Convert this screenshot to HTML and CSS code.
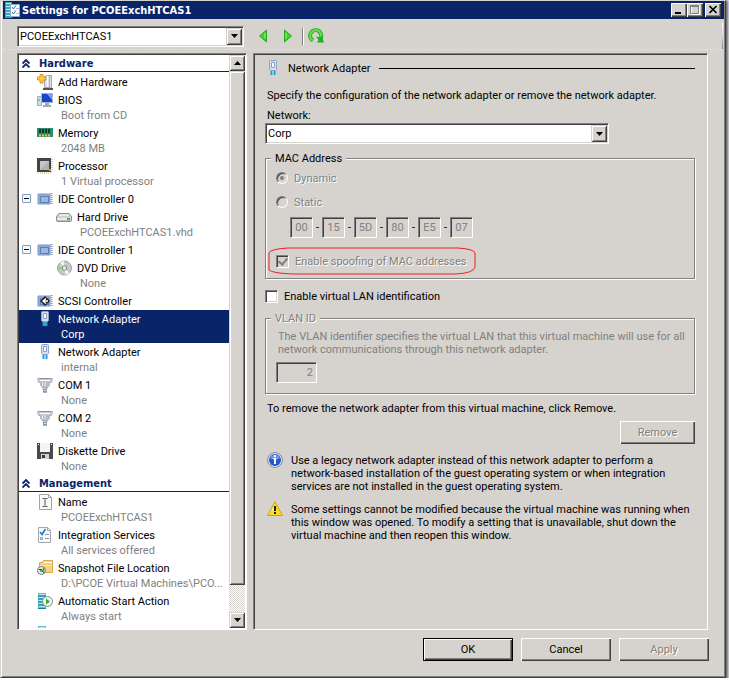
FILE: index.html
```
<!DOCTYPE html>
<html lang="en">
<head>
<meta charset="utf-8">
<title>Settings for PCOEExchHTCAS1</title>
<link rel="stylesheet" href="styles.css">
</head>
<body>
<svg class="defs" aria-hidden="true">
  <symbol id="chip" viewBox="0 0 16 16">
    <path d="M1 3h12v10H1z" fill="#8fabd6" stroke="#7f9cc9"/>
    <path d="M3.500 5.500h8v6h-8z" fill="#9db7de" stroke="#5b7db3"/>
    <path d="M14.500 2v12" stroke="#7894c2" stroke-width="2" stroke-dasharray="1 1"/>
    <path d="M2 2.500h9M2 13.500h9" stroke="#b9cbe6"/>
  </symbol>
  <symbol id="nic" viewBox="0 0 16 16">
    <path d="M4.500 1.500q0-1 1-1h5q1 0 1 1v8l-1 1h-5l-1-1z" fill="#d5e0f2" stroke="#8fa4c6"/>
    <path d="M6.500 2.500h3v5h-3z" fill="#f8fbff" stroke="#8ca0c2"/>
    <path d="M6.500 11v4M9.500 11v4" stroke="#1ba0d8" stroke-width="2"/>
    <path d="M8 11v4" stroke="#8ddcf5"/>
  </symbol>
  <symbol id="com" viewBox="0 0 16 16">
    <path d="M.5 1.500h15l-1 4h-2v3l-2 2h-5l-2-2v-3h-2z" fill="#c4cad2" stroke="#b0b6be"/>
    <path d="M3 3.500h10" stroke="#fff"/>
    <path d="M2 1.500h12" stroke="#8a919b"/>
    <path d="M3.500 4.500h9v3l-2 2h-5l-2-2z" fill="#b4bbc5"/>
    <path d="M5.500 5v4M8 5v4" stroke="#eef0f4"/>
    <path d="M5.500 10.500h5l-1 2v3h-3v-3z" fill="#d4d9e0" stroke="#a2aab6"/>
    <path d="M6 12.500h4M6 14.500h4" stroke="#8d96a3"/>
  </symbol>
  <symbol id="chevrons" viewBox="0 0 8 9">
    <path d="M.5 4.500L4 1l3.500 3.500M.5 8.500L4 5l3.500 3.500" fill="none" stroke="#0a246a" stroke-width="1.800"/>
  </symbol>
  <symbol id="server" viewBox="0 0 16 16">
    <path d="M1 0h8v16H1z" fill="#5bbfd0"/>
    <path d="M2 1.500h6M2 4.500h6M2 7.500h6M2 10.500h6M2 13.500h6" stroke="#b5edf3"/>
    <path d="M1 3h8M1 6h8M1 9h8M1 12h8M1 15.500h8" stroke="#237c94"/>
  </symbol>
</svg>

<div class="window">
  <header class="titlebar">
    <svg class="icon" viewBox="0 0 16 16" aria-hidden="true">
      <path d="M0 0h7v16H0z" fill="#3aa6b8"/>
      <path d="M1 1.500h5M1 4.500h5M1 7.500h5M1 10.500h5M1 13.500h5" stroke="#b5edf3"/>
      <path d="M5.500 2.500h9v12h-9z" fill="#fff" stroke="#9aa7c0"/>
      <path d="M7 5l1.500 2L11 3.500M7 10l1.500 2L11 8.500" fill="none" stroke="#1673c8"/>
      <path d="M11 6.500h3M11 11.500h3" stroke="#a9b4c6"/>
    </svg>
    <h1>Settings for PCOEExchHTCAS1</h1>
    <div class="captions">
      <button class="raised" aria-label="Minimize"><svg viewBox="0 0 12 10"><path d="M2 8h6" stroke="#000" stroke-width="2"/></svg></button>
      <button class="raised" aria-label="Maximize" disabled><svg viewBox="0 0 12 10"><path d="M2.500 1.500h8v8h-8z" fill="none" stroke="#fff"/><path d="M1.500 .5h8v8h-8z" fill="none" stroke="#808080"/><path d="M1 1.500h9" stroke="#808080"/></svg></button>
      <button class="raised close" aria-label="Close"><svg viewBox="0 0 12 10"><path d="M2.500 1l7 7M9.500 1l-7 7" stroke="#000" stroke-width="1.700"/></svg></button>
    </div>
  </header>

  <div class="toolbar">
    <div class="combo vm">
      <select aria-label="Virtual machine"><option>PCOEExchHTCAS1</option></select>
      <span class="raised arrow"><svg viewBox="0 0 7 4"><path d="M0 0h7L3.500 4z"/></svg></span>
    </div>
    <button class="tool" aria-label="Back"><svg viewBox="0 0 16 16"><path d="M10.500 2v12L3.500 8z" fill="#3fd42c" stroke="#2aa51d"/><path d="M9 5v5" stroke="#98f082"/></svg></button>
    <button class="tool" aria-label="Forward"><svg viewBox="0 0 16 16"><path d="M4.500 2v12l7-6z" fill="#3fd42c" stroke="#2aa51d"/><path d="M6 5v5" stroke="#98f082"/></svg></button>
    <span class="divider"></span>
    <button class="tool" aria-label="Refresh"><svg viewBox="0 0 16 16"><path d="M5 12.500A5.500 5.500 0 1 1 13 9" fill="none" stroke="#2aa51d" stroke-width="4"/><path d="M5 12.500A5.500 5.500 0 1 1 13 9" fill="none" stroke="#5be047" stroke-width="2.400"/><path d="M8 8.500l3 .5 4-1v4l1 2.500H9l1.500-2.500z" fill="#1fae2a"/></svg></button>
    <span class="edge"></span>
  </div>

  <main class="panes">
    <nav class="tree sunken">
      <div class="list">
        <h2><svg viewBox="0 0 8 9"><use href="#chevrons"/></svg>Hardware</h2>
        <ul>
          <li><svg class="icon" viewBox="0 0 16 16"><path d="M7.500 2.500l3-1h4v12h-7z" fill="#dfe2e4" stroke="#a3a8ac"/><path d="M10.500 2v11" stroke="#fff"/><path d="M12.500 2v11" stroke="#aeb4b9"/><path d="M6 15h10" stroke="#555" stroke-width="2"/><path d="M3 .5h3v2.500h3v3h-3v3h-3V6h-2.500V3h2.500z" fill="#fccf3c" stroke="#c88b0e" stroke-width=".8"/></svg><span>Add Hardware</span></li>
          <li><svg class="icon" viewBox="0 0 16 16"><path d="M.5 4.500h4v9h-4z" fill="#d5dade" stroke="#a3abb2"/><path d="M2 7v2" stroke="#2db92a"/><path d="M4.500 1.500h11v9h-11z" fill="#1744c9" stroke="#a7b3c6"/><path d="M10 2h5v6z" fill="#6da4f5"/><path d="M8 11h4v2h2v2H6v-2h2z" fill="#9fa8b3"/></svg><span>BIOS</span><small>Boot from CD</small></li>
          <li><svg class="icon" viewBox="0 0 16 16"><path d="M0 3h16v9H0z" fill="#24906a"/><path d="M2 4h2v4H2zM5 4h2v4H5zM8 4h2v4H8zM11 4h2v4h-2z" fill="#24302c"/><path d="M2 10.500h12" stroke="#f5be2b" stroke-width="2" stroke-dasharray="2 1"/></svg><span>Memory</span><small>2048 MB</small></li>
          <li><svg class="icon" viewBox="0 0 16 16"><path d="M0 0h14v14H0z" fill="#444"/><path d="M3 3h9v9H3z" fill="#c3c4c6"/><path d="M3 12l9-9v9z" fill="#aeb0b4"/><path d="M12 11h2v2h-2z" fill="#d99a28"/><path d="M1 15h13M15 1v13" stroke="#b9a16a" stroke-dasharray="1 1"/></svg><span>Processor</span><small>1 Virtual processor</small></li>
          <li><button class="fold" aria-label="Collapse"></button><svg class="icon" viewBox="0 0 16 16"><use href="#chip"/></svg><span>IDE Controller 0</span></li>
          <li class="child"><svg class="icon" viewBox="0 0 16 16"><path d="M3 4h10l3 3.500v4l-1.500 1.500h-13L0 11.500v-4z" fill="#8b8f91"/><path d="M3.500 5h9L15 8v3.500H1V8z" fill="#e9ebeb"/><path d="M1 8h14" stroke="#b5b9ba"/><path d="M11 9h3v2h-3z" fill="#36bb2d"/></svg><span>Hard Drive</span><small>PCOEExchHTCAS1.vhd</small></li>
          <li><button class="fold" aria-label="Collapse"></button><svg class="icon" viewBox="0 0 16 16"><use href="#chip"/></svg><span>IDE Controller 1</span></li>
          <li class="child"><svg class="icon" viewBox="0 0 16 16"><circle cx="8.500" cy="8" r="7" fill="#c7c8c9" stroke="#a2a3a4"/><path d="M8.500 8L4 2.500 8 1zM8.500 8l5 5-4 2z" fill="#f5f5f5"/><path d="M8.500 8L1.500 6 2 10z" fill="#8be06d"/><circle cx="8.500" cy="8" r="2.200" fill="#eee" stroke="#858585"/></svg><span>DVD Drive</span><small>None</small></li>
          <li><svg class="icon" viewBox="0 0 16 16"><use href="#chip"/><path d="M8 3l5 5-5 5-5-5z" fill="#222"/><path d="M11 8H6.500M9 5.500L6 8l3 2.500" fill="none" stroke="#fff" stroke-width="1.400"/></svg><span>SCSI Controller</span></li>
          <li class="selected"><svg class="icon" viewBox="0 0 16 16"><use href="#nic"/></svg><span>Network Adapter</span><small>Corp</small></li>
          <li><svg class="icon" viewBox="0 0 16 16"><use href="#nic"/></svg><span>Network Adapter</span><small>internal</small></li>
          <li><svg class="icon" viewBox="0 0 16 16"><use href="#com"/></svg><span>COM 1</span><small>None</small></li>
          <li><svg class="icon" viewBox="0 0 16 16"><use href="#com"/></svg><span>COM 2</span><small>None</small></li>
          <li><svg class="icon" viewBox="0 0 16 16"><path d="M0 0h16v16H0z" fill="#4a4a4c"/><path d="M3 0h10v9H3z" fill="#f4f4f6"/><path d="M4 11h8v5H4z" fill="#d0d1d3"/><path d="M5 12h3v3H5z" fill="#3a3a3c"/><path d="M1 1h1v1H1zM14 1h1v1h-1z" fill="#fff"/></svg><span>Diskette Drive</span><small>None</small></li>
        </ul>
        <h2><svg viewBox="0 0 8 9"><use href="#chevrons"/></svg>Management</h2>
        <ul>
          <li><svg class="icon" viewBox="0 0 16 16"><path d="M2.500 .5h9l3 3v12h-12z" fill="#fbfbfb" stroke="#a3a3a3"/><path d="M11.500 .5v3h3" fill="none" stroke="#a3a3a3"/><path d="M5.500 4.500h2l.5.5.5-.5h2M5.500 12.500h2L8 12l.5.500h2M8 5v7" fill="none" stroke="#555"/></svg><span>Name</span><small>PCOEExchHTCAS1</small></li>
          <li><svg class="icon" viewBox="0 0 16 16"><path d="M1.500 .5h9l3 3v12h-12z" fill="#fbfbfb" stroke="#9fa7b2"/><path d="M10.500 .5v3h3" fill="none" stroke="#9fa7b2"/><path d="M3 5l2 2.500L8.500 2" fill="none" stroke="#1c80d6" stroke-width="1.700"/><path d="M3.500 10.500h2v2h-2z" fill="none" stroke="#8f98a6"/><path d="M8 7.500h4M8 11.500h4" stroke="#8f98a6"/></svg><span>Integration Services</span><small>All services offered</small></li>
          <li><svg class="icon" viewBox="0 0 16 16"><path d="M2.500 2.500h3l1-2h9v12h-13z" fill="#f6d176" stroke="#d9ab4c"/><path d="M7 2.500h8" stroke="#fff"/><path d="M3 5.500h12" stroke="#fbe6a8"/><circle cx="4.500" cy="10.500" r="4" fill="#eceeef" stroke="#777"/><path d="M2 9.500h3" stroke="#333"/><path d="M6.500 8v3H3" fill="none" stroke="#25a22e" stroke-width="1.500"/><path d="M5 11l2 2" stroke="#d1242a"/></svg><span>Snapshot File Location</span><small>D:\PCOE Virtual Machines\PCO...</small></li>
          <li><svg class="icon" viewBox="0 0 16 16"><use href="#server"/><circle cx="10.500" cy="8.500" r="5" fill="#f3f5f3" stroke="#868d90"/><path d="M9 5.500v6l4-3z" fill="#26b32a"/></svg><span>Automatic Start Action</span><small>Always start</small></li>
          <li><svg class="icon" viewBox="0 0 16 16"><use href="#server"/></svg></li>
        </ul>
      </div>
      <div class="scrollbar">
        <button class="raised" aria-label="Scroll up"><svg viewBox="0 0 7 4"><path d="M0 4h7L3.500 0z"/></svg></button>
        <span class="raised thumb"></span>
        <span class="track"></span>
        <button class="raised" aria-label="Scroll down"><svg viewBox="0 0 7 4"><path d="M0 0h7L3.500 4z"/></svg></button>
      </div>
    </nav>

    <section class="details sunken">
      <h2 class="heading"><svg class="icon" viewBox="0 0 16 16"><use href="#nic"/></svg>Network Adapter</h2>
      <p class="intro">Specify the configuration of the network adapter or remove the network adapter.</p>
      <label class="netlabel" for="network">Network:</label>
      <div class="combo network">
        <select id="network"><option>Corp</option></select>
        <span class="raised arrow"><svg viewBox="0 0 7 4"><path d="M0 0h7L3.500 4z"/></svg></span>
      </div>

      <fieldset class="mac">
        <legend>MAC Address</legend>
        <label class="choice off"><input type="radio" name="mac" checked disabled>Dynamic</label>
        <label class="choice off"><input type="radio" name="mac" disabled>Static</label>
        <div class="octets">
          <input aria-label="Octet 1" value="00" disabled><i>-</i><input aria-label="Octet 2" value="15" disabled><i>-</i><input aria-label="Octet 3" value="5D" disabled><i>-</i><input aria-label="Octet 4" value="80" disabled><i>-</i><input aria-label="Octet 5" value="E5" disabled><i>-</i><input aria-label="Octet 6" value="07" disabled>
        </div>
        <label class="choice off spoof"><input type="checkbox" checked disabled>Enable spoofing of MAC addresses
          <svg class="marker" viewBox="0 0 208 28" preserveAspectRatio="none"><path d="M1 6Q2 2 20 1H190Q206 2 207 6V20Q206 26 188 27H24Q4 26 1 23Z"/></svg>
        </label>
      </fieldset>

      <label class="choice vlanbox"><input type="checkbox">Enable virtual LAN identification</label>
      <fieldset class="vlan">
        <legend class="off">VLAN ID</legend>
        <p>The VLAN identifier specifies the virtual LAN that this virtual machine will use for all network communications through this network adapter.</p>
        <input aria-label="VLAN ID" value="2" disabled>
      </fieldset>

      <p class="removal">To remove the network adapter from this virtual machine, click Remove.</p>
      <button class="push off remove" disabled>Remove</button>

      <div class="note">
        <svg class="icon" viewBox="0 0 16 16"><circle cx="8" cy="8" r="7.400" fill="#e6e9f2" stroke="#7d8799"/><circle cx="8" cy="8" r="6" fill="#2357cf"/><path d="M3 6a5.500 5 0 0 1 10 0q-5 3-10 0z" fill="#6f9bf0"/><path d="M7 3h2v2H7zM6 6h3v6H7V7H6z" fill="#fff"/></svg>
        <p>Use a legacy network adapter instead of this network adapter to perform a network-based installation of the guest operating system or when integration services are not installed in the guest operating system.</p>
      </div>
      <div class="note">
        <svg class="icon" viewBox="0 0 16 16"><path d="M8 .8L15.500 14.500H.5z" fill="#ffd91f" stroke="#d6a00c" stroke-linejoin="round"/><path d="M8 3L4 10h4z" fill="#fff08a"/><path d="M7 5h2v5H7zM7 11h2v2H7z" fill="#1b1b1b"/></svg>
        <p>Some settings cannot be modified because the virtual machine was running when this window was opened. To modify a setting that is unavailable, shut down the virtual machine and then reopen this window.</p>
      </div>
    </section>
  </main>

  <footer>
    <button class="push default">OK</button>
    <button class="push">Cancel</button>
    <button class="push off" disabled>Apply</button>
  </footer>
</div>
</body>
</html>
```
FILE: styles.css
```
:root {
  --face: #d6d3ce;
  --navy: #0a246a;
  --gray: #808080;
  --dark: #404040;
}
* { box-sizing: border-box; }
body, h1, h2, p, ul, fieldset, legend { margin: 0; padding: 0; }
body {
  background: #fff;
  color: #000;
  font: 11px/13px Roboto, "Liberation Sans", sans-serif;
}
button, input, select { font: inherit; color: inherit; margin: 0; }
svg { display: block; flex: none; }
.defs { position: absolute; width: 0; height: 0; }
.icon { width: 16px; height: 16px; }

.window {
  display: flex;
  flex-direction: column;
  height: calc(100vh - 4px);
  margin-right: 3px;
  padding: 0 1px 0 2px;
  background: var(--face);
  border: 1px solid var(--face);
  border-right-color: var(--dark);
  border-bottom-color: var(--dark);
  box-shadow: inset 1px 0 #fff, inset -1px -1px var(--gray), 1px 1px 3px 1px #555;
}

.raised {
  background: var(--face);
  border: 0;
  box-shadow: inset 1px 1px var(--face), inset -1px -1px var(--dark), inset 2px 2px #fff, inset -2px -2px var(--gray);
}
.sunken {
  border: 1px solid;
  border-color: var(--gray) #fff #fff var(--gray);
  box-shadow: inset 1px 1px var(--dark);
}

.titlebar {
  display: flex;
  align-items: center;
  height: 18px;
  padding: 0 3px 0 2px;
  background: var(--navy);
  color: #fff;
}
.titlebar h1, .list h2 { font: bold 11px/13px "DejaVu Sans Condensed", "Liberation Sans", sans-serif; }
.titlebar h1 { flex: 1; padding-left: 1px; }
.captions { display: flex; }
.captions button {
  display: grid;
  place-items: center;
  width: 16px;
  height: 14px;
  padding: 0;
  box-shadow: inset 1px 1px #fff, inset -1px -1px var(--dark), inset -2px -2px var(--gray);
}
.captions .close { margin-left: 2px; }
.captions svg { width: 12px; height: 10px; }

.toolbar {
  display: flex;
  align-items: center;
  height: 31px;
  margin-right: 1px;
  padding: 4px 0 0 14px;
  border-bottom: 1px dashed #e2dfda;
}
.combo {
  position: relative;
  height: 21px;
  padding: 2px;
  background: #fff;
  border: 1px solid;
  border-color: var(--gray) #fff #fff var(--gray);
  box-shadow: inset 1px 1px var(--dark), inset -1px -1px var(--face);
}
.combo select {
  display: block;
  width: 100%;
  height: 15px;
  padding: 0 18px 0 0;
  background: none;
  border: 0;
  appearance: none;
  outline: 0;
}
.arrow {
  position: absolute;
  top: 1px;
  right: 1px;
  bottom: 1px;
  display: grid;
  place-items: center;
  width: 16px;
  pointer-events: none;
}
.arrow svg, .scrollbar svg { width: 7px; height: 4px; }
.vm { width: 227px; margin-right: 12px; }
.tool { width: 16px; height: 16px; margin-right: 8px; padding: 0; background: none; border: 0; }
.tool svg { width: 16px; height: 16px; }
.divider { width: 2px; height: 17px; margin: 0 4px 0 -2px; border-left: 1px solid var(--gray); border-right: 1px solid #fff; }
.edge { width: 1px; height: 26px; margin-left: auto; background: linear-gradient(#fff, var(--face), var(--gray)); }

.panes { display: flex; flex: 1; gap: 6px; min-height: 0; padding: 3px 16px 0 14px; }
.tree { display: flex; flex: none; width: 230px; padding: 1px; background: #fff; }
.list { flex: 1; min-width: 0; overflow: hidden; }
.list h2 {
  display: flex;
  align-items: center;
  height: 17px;
  margin-bottom: 1px;
  padding: 1px 0 0 3px;
  border-bottom: 1px solid var(--navy);
  color: var(--navy);
}
.list h2 svg { width: 8px; height: 9px; margin-right: 9px; }
.list ul { list-style: none; }
.list li {
  display: grid;
  grid-template-columns: 16px minmax(0, 1fr);
  grid-template-rows: 18px;
  column-gap: 5px;
  align-items: center;
  position: relative;
  padding: 0 8px 0 18px;
}
.list li.child { padding-left: 37px; }
.list small {
  grid-column: 2;
  height: 15px;
  padding-left: 3px;
  color: var(--gray);
  font-size: 11px;
  line-height: 13px;
  white-space: nowrap;
}
.list .selected, .list .selected small { color: #fff; }
.list .selected { background: var(--navy); }
.fold {
  position: absolute;
  top: 4px;
  left: 3px;
  width: 9px;
  height: 9px;
  padding: 0;
  background: linear-gradient(#000, #000) center / 5px 1px no-repeat, #f7f8fa;
  border: 1px solid #7b9ebd;
  border-radius: 1px;
}

.scrollbar { display: flex; flex-direction: column; flex: none; width: 16px; }
.scrollbar button { display: grid; place-items: center; height: 16px; padding: 0; }
.thumb { flex: 19; }
.track { flex: 1; background: repeating-conic-gradient(#fff 0 25%, var(--face) 0 50%) 0 0 / 2px 2px; }

.details { flex: 1; min-width: 0; padding: 6px 12px 0 11px; }
.heading { display: flex; align-items: center; height: 16px; font-size: 11px; font-weight: normal; }
.heading .icon { margin-right: 7px; }
.heading::after { content: ""; flex: 1; height: 1px; margin-left: 8px; background: #000; }
.intro { margin: 13px 0 7px 2px; }
.netlabel { display: block; margin: 0 0 1px 2px; }
.network { width: 80%; }

fieldset {
  min-width: 0;
  border: 1px solid var(--gray);
  box-shadow: inset 1px 1px #fff, 1px 1px #fff;
}
legend { padding: 0 4px; background: var(--face); }
.off { color: var(--gray); text-shadow: 1px 1px #fff; }
.mac { margin-top: 8px; padding: 6px 10px 10px; }
.mac legend, .vlan legend { margin-left: -5px; }
.choice { display: flex; align-items: center; height: 14px; }
.choice + .choice { margin-top: 10px; }
.choice input {
  display: grid;
  place-items: center;
  width: 13px;
  height: 13px;
  margin-right: 6px;
  appearance: none;
  background: #fff;
  border: 1px solid;
  border-color: var(--gray) #fff #fff var(--gray);
  box-shadow: inset 1px 1px var(--dark), inset -1px -1px var(--face);
}
.choice input:disabled { background: var(--face); }
.choice input[type="radio"] { width: 12px; height: 12px; border-radius: 50%; }
.choice input[type="radio"]:checked::after { content: ""; width: 4px; height: 4px; border-radius: 50%; background: var(--gray); }
.choice input[type="checkbox"]:checked::after {
  content: "";
  width: 4px;
  height: 7px;
  margin-bottom: 2px;
  border: solid var(--gray);
  border-width: 0 2px 2px 0;
  transform: rotate(40deg);
}
.octets { display: flex; align-items: center; margin: 8px 0 16px 14px; }
.octets i { width: 9px; font-style: normal; text-align: center; }
.octets input, .vlan input {
  width: 23px;
  height: 21px;
  padding: 0;
  background: var(--face);
  border: 1px solid;
  border-color: var(--gray) #fff #fff var(--gray);
  box-shadow: inset 1px 1px var(--dark);
  color: var(--gray);
  text-align: center;
}
.spoof { position: relative; }
.marker { position: absolute; top: -7px; left: -8px; width: 208px; height: 28px; }
.marker path { fill: none; stroke: #ed1c24; }

.vlanbox { margin-top: 10px; }
.vlan { margin-top: 9px; padding: 5px 4px 10px 10px; }
.vlan p { padding: 0 0 6px 2px; color: var(--gray); }
.vlan input { display: block; width: 41px; padding-right: 3px; text-align: right; }
.removal { margin: 8px 0 6px 2px; }
.push {
  width: 90px;
  height: 23px;
  padding: 0;
  background: var(--face);
  border: 0;
  box-shadow: inset 1px 1px #fff, inset -1px -1px var(--dark), inset -2px -2px var(--gray);
}
.push.off { color: var(--gray); }
.default { box-shadow: inset 0 0 0 1px #000, inset 2px 2px #fff, inset -2px -2px var(--dark), inset -3px -3px var(--gray); }
.remove { display: block; width: 75px; margin-left: auto; }
.note { display: flex; gap: 8px; margin: 8px 0 0 2px; }
.note p { padding-top: 2px; }

footer { display: flex; justify-content: flex-end; gap: 8px; padding: 8px 15px 16px; }
```
